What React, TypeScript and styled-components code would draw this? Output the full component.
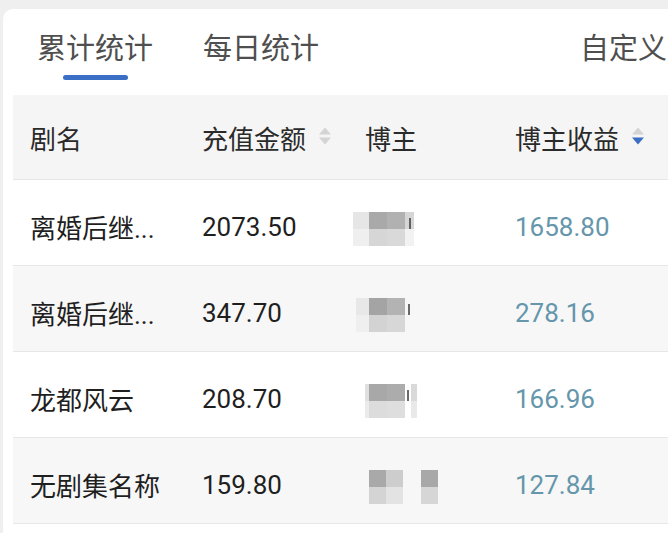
import React from "react";
import styled, { createGlobalStyle } from "styled-components";

const Global = createGlobalStyle`
  html, body { margin: 0; padding: 0; }
  body {
    background: #efefef;
    overflow: hidden;
    font-family: "Roboto", "Noto Sans CJK SC", "Noto Sans", sans-serif;
  }
`;

const Page = styled.div`
  width: 668px;
  height: 533px;
  padding: 9px 0 0 3px;
  box-sizing: border-box;
  overflow: hidden;
`;

const Card = styled.div`
  background: #ffffff;
  border-radius: 10px 0 0 0;
  height: 100%;
  box-sizing: border-box;
`;

const TabBar = styled.div`
  display: flex;
  align-items: flex-start;
  height: 86px;
  padding: 0 1px 0 34px;
  gap: 50px;
`;

const Tab = styled.div`
  display: flex;
  flex-direction: column;
  align-items: center;
  padding-top: 20px;
  font-family: "Noto Sans CJK SC", sans-serif;
  font-size: 29px;
  line-height: 34px;
  color: #4f4f4f;
  white-space: nowrap;
  &:last-child { margin-left: auto; }
`;

const Underline = styled.div<{ $show: boolean }>`
  width: 65px;
  height: 5px;
  margin-top: 12px;
  border-radius: 3px;
  background: ${(p) => (p.$show ? "#3b6fc6" : "transparent")};
`;

const Table = styled.div`
  margin-left: 10px;
`;

const cols = "172px 163px 150px 1fr";

const HeaderRow = styled.div`
  display: grid;
  grid-template-columns: ${cols};
  height: 85px;
  background: #f5f5f5;
  border-bottom: 1px solid #e6e6e6;
  box-sizing: border-box;
  align-items: center;
`;

const HeadCell = styled.div`
  display: flex;
  align-items: center;
  gap: 12px;
  padding-left: 17px;
  font-family: "Noto Sans CJK SC", sans-serif;
  font-size: 26px;
  color: #2a2a2a;
  white-space: nowrap;
  svg { margin-top: -3px; flex: none; }
`;

const Row = styled.div<{ $alt: boolean }>`
  display: grid;
  grid-template-columns: ${cols};
  height: 86px;
  background: ${(p) => (p.$alt ? "#f7f7f7" : "#ffffff")};
  border-bottom: 1px solid #e7e7e7;
  box-sizing: border-box;
  align-items: center;
`;

const Cell = styled.div<{ $accent?: boolean }>`
  padding: 8px 0 0 17px;
  font-size: 26px;
  color: ${(p) => (p.$accent ? "#6596ab" : "#1f1f1f")};
  white-space: nowrap;
  overflow: hidden;
  display: flex;
  align-items: center;
`;

const Mosaic = styled.div`
  display: flex;
  align-items: center;
  margin-top: 4px;
`;

const Block = styled.div`
  display: flex;
  flex-direction: column;
`;

const Piece = styled.div<{ $h: number }>`
  height: ${(p) => p.$h}px;
  display: flex;
  justify-content: center;
  align-items: flex-end;
`;

const Stroke = styled.div`
  width: 2px;
  height: 11px;
  background: #3a3a3a;
  opacity: 0.75;
`;

type Col = { w: number; top: string; bottom: string; mark?: boolean };

const SortIcon = ({ active }: { active: boolean }) => (
  <svg width="14" height="20" viewBox="0 0 14 20">
    <polygon points="7,1.5 13,8.5 1,8.5" fill="#d4d4d4" />
    <polygon points="1,11.5 13,11.5 7,18.5" fill={active ? "#3b6fc6" : "#d4d4d4"} />
  </svg>
);

const rows: {
  name: string;
  amount: string;
  income: string;
  offset: number;
  blocks: Col[];
}[] = [
  {
    name: "离婚后继...",
    amount: "2073.50",
    income: "1658.80",
    offset: -12,
    blocks: [
      { w: 16, top: "#e6e6e6", bottom: "#efefef" },
      { w: 18, top: "#a9a9a9", bottom: "#d6d6d6" },
      { w: 18, top: "#b1b1b1", bottom: "#d9d9d9" },
      { w: 9, top: "#d6d6d6", bottom: "#f2f2f2", mark: true },
    ],
  },
  {
    name: "离婚后继...",
    amount: "347.70",
    income: "278.16",
    offset: -9,
    blocks: [
      { w: 13, top: "#e8e8e8", bottom: "#efefef" },
      { w: 18, top: "#a4a4a4", bottom: "#d3d3d3" },
      { w: 18, top: "#b3b3b3", bottom: "#d7d7d7" },
      { w: 8, top: "#f7f7f7", bottom: "#f7f7f7", mark: true },
    ],
  },
  {
    name: "龙都风云",
    amount: "208.70",
    income: "166.96",
    offset: 0,
    blocks: [
      { w: 4, top: "#e0e0e0", bottom: "#ebebeb" },
      { w: 18, top: "#a8a8a8", bottom: "#dcdcdc" },
      { w: 18, top: "#acacac", bottom: "#dedede" },
      { w: 6, top: "#ffffff", bottom: "#ffffff", mark: true },
      { w: 6, top: "#d9d9d9", bottom: "#e9e9e9" },
    ],
  },
  {
    name: "无剧集名称",
    amount: "159.80",
    income: "127.84",
    offset: 4,
    blocks: [
      { w: 17, top: "#a9a9a9", bottom: "#d4d4d4" },
      { w: 17, top: "#cdcdcd", bottom: "#e3e3e3" },
      { w: 18, top: "#f7f7f7", bottom: "#f7f7f7" },
      { w: 17, top: "#a8a8a8", bottom: "#d6d6d6" },
    ],
  },
];

export default function App() {
  return (
    <>
      <Global />
      <Page>
        <Card>
          <TabBar>
            <Tab>
              累计统计
              <Underline $show />
            </Tab>
            <Tab>
              每日统计
              <Underline $show={false} />
            </Tab>
            <Tab>
              自定义
              <Underline $show={false} />
            </Tab>
          </TabBar>
          <Table>
            <HeaderRow>
              <HeadCell>剧名</HeadCell>
              <HeadCell>
                充值金额
                <SortIcon active={false} />
              </HeadCell>
              <HeadCell>博主</HeadCell>
              <HeadCell>
                博主收益
                <SortIcon active />
              </HeadCell>
            </HeaderRow>
            {rows.map((r, i) => (
              <Row key={i} $alt={i % 2 === 1}>
                <Cell>{r.name}</Cell>
                <Cell>{r.amount}</Cell>
                <Cell>
                  <Mosaic style={{ marginLeft: r.offset }}>
                    {r.blocks.map((b, j) => (
                      <Block key={j} style={{ width: b.w }}>
                        <Piece $h={17} style={{ background: b.top }}>
                          {b.mark ? <Stroke /> : null}
                        </Piece>
                        <Piece $h={17} style={{ background: b.bottom }} />
                      </Block>
                    ))}
                  </Mosaic>
                </Cell>
                <Cell $accent>{r.income}</Cell>
              </Row>
            ))}
          </Table>
        </Card>
      </Page>
    </>
  );
}
